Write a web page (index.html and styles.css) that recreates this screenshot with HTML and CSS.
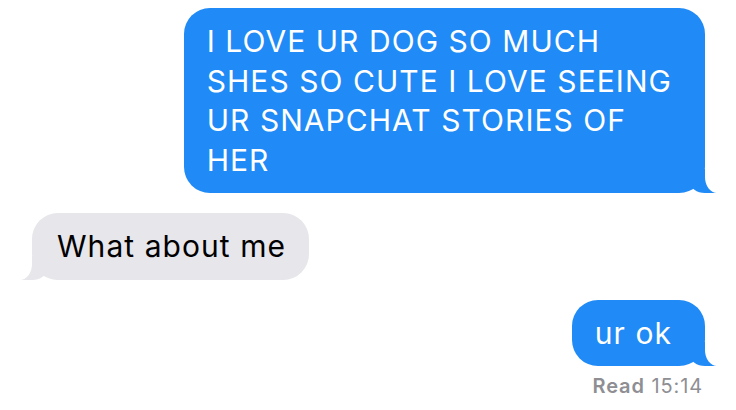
FILE: index.html
```html
<!DOCTYPE html>
<html lang="en">
<head>
<meta charset="utf-8">
<title>Messages</title>
<link rel="stylesheet" href="styles.css">
</head>
<body>
<div class="chat">
  <div class="msg sent big">I LOVE UR DOG SO MUCH<br>SHES SO CUTE I LOVE SEEING<br>UR SNAPCHAT STORIES OF<br>HER</div>
  <div class="msg received">What about me</div>
  <div class="msg sent">ur ok</div>
  <div class="receipt"><span class="receipt-label">Read</span> 15:14</div>
</div>
</body>
</html>
```

FILE: styles.css
```css
html, body {
  margin: 0;
  background: #ffffff;
}

body {
  font-family: Inter, "Liberation Sans", sans-serif;
  -webkit-font-smoothing: antialiased;
}

.chat {
  display: flex;
  flex-direction: column;
  padding: 8px 31px 0 32px;
}

.msg {
  position: relative;
  font-size: 30px;
  line-height: 39.5px;
  letter-spacing: 1.05px;
  border-radius: 26px;
  padding: 14px 33px 13px 23px;
  white-space: nowrap;
}

.msg + .msg {
  margin-top: 20px;
}

.sent {
  align-self: flex-end;
  background: #208af6;
  color: #ffffff;
}

.received {
  align-self: flex-start;
  background: #e6e6eb;
  color: #000000;
  padding: 14px 23px 13px 25px;
}

.msg::before,
.msg::after {
  content: "";
  position: absolute;
  bottom: 0;
}

.sent::before {
  right: -11px;
  width: 26px;
  height: 24px;
  background: #208af6;
  border-bottom-left-radius: 15px 11px;
}

.sent::after {
  right: -40px;
  width: 40px;
  height: 26px;
  background: #ffffff;
  border-bottom-left-radius: 12px 16px;
}

.received::before {
  left: -11px;
  width: 26px;
  height: 24px;
  background: #e6e6eb;
  border-bottom-right-radius: 15px 11px;
}

.received::after {
  left: -40px;
  width: 40px;
  height: 26px;
  background: #ffffff;
  border-bottom-right-radius: 12px 16px;
}

.receipt {
  align-self: flex-end;
  margin: 8px 2px 0 0;
  font-size: 20px;
  line-height: 24px;
  letter-spacing: 0.9px;
  color: #8e8e93;
}

.receipt-label {
  font-weight: 600;
}
```
